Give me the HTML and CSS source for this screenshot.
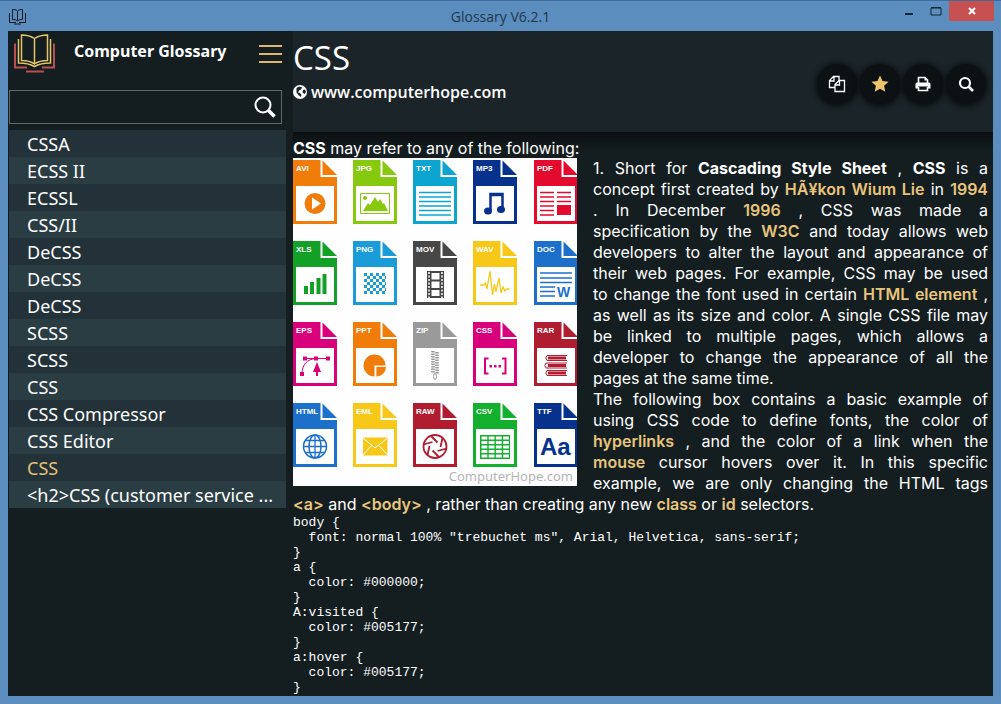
FILE: index.html
```html
<!DOCTYPE html>
<html lang="en">
<head>
<meta charset="utf-8">
<title>Glossary V6.2.1</title>
<link rel="stylesheet" href="styles.css">
</head>
<body>
<div class="window">
  <header class="titlebar">
    <svg class="app-icon" viewBox="0 0 17 17" width="17" height="17" fill="none" stroke="#10181c" stroke-width="1"><path d="M8.500 3v9.500M8.500 3C7 1.500 5 1.500 3.500 1.500v10C5 11.500 7 11.500 8.500 13C10 11.500 12 11.500 13.500 11.500v-10C12 1.500 10 1.500 8.500 3M.500 5v9.500H7M10 14.500h6.500V5M5 16h7"/></svg>
    <h1 class="window-title">Glossary V6.2.1</h1>
    <div class="window-controls">
      <button class="win-btn" aria-label="Minimize"><svg viewBox="0 0 12 12" width="12" height="12"><path d="M2 8h8v2H2z" fill="#15282f"/></svg></button>
      <button class="win-btn" aria-label="Maximize"><svg viewBox="0 0 12 12" width="12" height="12"><path d="M1 3h10v7H1zM1 2.500h10" fill="none" stroke="#15282f"/></svg></button>
      <button class="win-btn close" aria-label="Close"><svg viewBox="0 0 12 12" width="12" height="12"><path d="M3 3l6 6M9 3l-6 6" stroke="#fff" stroke-width="2"/></svg></button>
    </div>
  </header>
  <div class="client">
    <aside class="sidebar">
      <div class="brand">
        <svg class="logo" viewBox="0 0 42 42" width="42" height="42" fill="none" stroke-width="1.500">
          <path stroke="#b9504f" stroke-width="2" d="M1 10.500v24h12M40 10.500v24H28M12 38.500h18"/>
          <path stroke="#e3c569" d="M20.500 5.500v25M20.500 5.500C16 2.500 11 2 7.500 2v25.500c5 0 9 .500 13 3.500 4-3 8-3.500 13-3.500V2c-4 0-8.500.500-13 3.500zM4.500 6v24c6 0 11 .500 16 3.500 5-3 10-3.500 16-3.500V6"/>
        </svg>
        <span class="brand-name">Computer Glossary</span>
        <button class="menu-btn" aria-label="Menu"><svg viewBox="0 0 24 20" width="24" height="20"><path d="M1 2h23M1 10h23M1 18h23" stroke="#dcb96b" stroke-width="2"/></svg></button>
      </div>
      <form class="search">
        <input class="search-input" type="text" aria-label="Search terms">
        <button class="search-btn" type="button" aria-label="Search"><svg viewBox="0 0 24 24" width="24" height="24" fill="none" stroke="#fff"><circle cx="10" cy="10" r="7.500" stroke-width="2"/><path d="M15.500 15.500l6 6" stroke-width="3.500"/></svg></button>
      </form>
      <ul class="terms">
        <li><a class="term" href="#">CSSA</a></li>
        <li><a class="term" href="#">ECSS II</a></li>
        <li><a class="term" href="#">ECSSL</a></li>
        <li><a class="term" href="#">CSS/II</a></li>
        <li><a class="term" href="#">DeCSS</a></li>
        <li><a class="term" href="#">DeCSS</a></li>
        <li><a class="term" href="#">DeCSS</a></li>
        <li><a class="term" href="#">SCSS</a></li>
        <li><a class="term" href="#">SCSS</a></li>
        <li><a class="term" href="#">CSS</a></li>
        <li><a class="term" href="#">CSS Compressor</a></li>
        <li><a class="term" href="#">CSS Editor</a></li>
        <li><a class="term current" href="#" aria-current="page">CSS</a></li>
        <li><a class="term" href="#">&lt;h2&gt;CSS (customer service ...</a></li>
      </ul>
    </aside>
    <main class="main">
      <div class="topic">
        <div class="topic-text">
          <h2 class="topic-title">CSS</h2>
          <a class="source" href="#"><svg viewBox="0 0 14 14" width="14" height="14"><circle cx="7" cy="7" r="7" fill="#fff"/><path d="M3.500 3l3-1.500 2.500 1-1 2-2 1-1 2 2 .500 1.500 2L7.500 12 5.500 10 3.500 7.500z M10 5l2-.500 1 2.500-1.500 2-2-1.500z" fill="#1b2327"/></svg>www.computerhope.com</a>
        </div>
        <div class="actions">
          <button class="action" aria-label="Copy"><svg viewBox="0 0 18 18" width="18" height="18" fill="none" stroke="#fff" stroke-width="1.300"><path d="M7 12.500H1.500v-7l4-4H11v4M1.500 6H6V1.500M7 9.500l4-4h5.500v11H7zM7 10h4.500V5.500"/></svg></button>
          <button class="action" aria-label="Favorite"><svg viewBox="0 0 18 18" width="18" height="18"><path d="M9 .500l2.500 5.500 6 .700-4.400 4.100 1.200 6L9 13.800l-5.300 3 1.200-6L.500 6.700l6-.700z" fill="#ecc66b"/></svg></button>
          <button class="action" aria-label="Print"><svg viewBox="0 0 18 18" width="18" height="18"><path d="M4.500 8V2.500H11L13.500 5v3M4.500 12v3.500h9V12" fill="none" stroke="#fff" stroke-width="1.600"/><path d="M10.500 2v3.500H14M1.500 9q0-1.500 1.500-1.500h12q1.500 0 1.500 1.500v4.500h-2.500V11.500H4v2H1.500z" fill="#fff"/></svg></button>
          <button class="action" aria-label="Find"><svg viewBox="0 0 18 18" width="18" height="18" fill="none" stroke="#fff"><circle cx="8" cy="8" r="5" stroke-width="2.200"/><path d="M11.500 11.500l4.500 4.500" stroke-width="2.600"/></svg></button>
        </div>
      </div>
      <article class="article">
        <p class="lead"><b>CSS</b> may refer to any of the following:</p>
        <svg class="figure" viewBox="0 0 284 328" width="284" height="328" role="img" aria-label="File type icons">
          <defs>
            <g id="file"><path fill="currentColor" d="M0 0h27.500v17H44v47H0zM29.500 0.500L44 15H29.500z"/><path fill="#fff" d="M3 26h38v35H3z"/></g>
          </defs>
          <rect width="284" height="328" fill="#fefefe"/>
          <g class="o" transform="translate(0 2)"><use href="#file"/><text class="tag" x="3" y="11">AVI</text><circle cx="22" cy="43.500" r="10.500" fill="currentColor"/><path d="M19 37.500v12l9-6z" fill="#fff"/></g>
          <g class="lime" transform="translate(60 2)"><use href="#file"/><text class="tag" x="3" y="11">JPG</text><path d="M7.500 33.500h29v20h-29z" fill="none" stroke="currentColor"/><circle cx="12" cy="38" r="2" fill="currentColor"/><path d="M10 51l5-8 2 2 5-8 3 5 2-3 3 5 1-1 4 8z" fill="currentColor"/></g>
          <g class="cyan" transform="translate(120 2)"><use href="#file"/><text class="tag" x="3" y="11">TXT</text><path d="M6 32.500h32M6 37h32M6 41.500h32M6 46h32M6 50.500h32M6 55h32" stroke="currentColor" stroke-width="1.500"/></g>
          <g class="navy" transform="translate(180 2)"><use href="#file"/><text class="tag" x="3" y="11">MP3</text><path d="M17.500 51V34h12v15M17 35h13" fill="none" stroke="currentColor" stroke-width="2.500"/><ellipse cx="15" cy="51" rx="4" ry="3.500" fill="currentColor"/><ellipse cx="28" cy="49.500" rx="4" ry="3.500" fill="currentColor"/></g>
          <g class="red" transform="translate(241 2)"><use href="#file"/><text class="tag" x="3" y="11">PDF</text><path d="M6 32.500h14M23 32.500h14M6 37h14M23 37h14M6 41.500h14M23 41.500h14M6 46h14M6 50.500h14M6 55h14" stroke="currentColor" stroke-width="1.500"/><path d="M23 45h14v10H23z" fill="currentColor"/></g>

          <g class="green" transform="translate(0 83)"><use href="#file"/><text class="tag" x="3" y="11">XLS</text><path d="M13 53v-8M19 53V41M25.500 53V37M31.500 53V33" stroke="currentColor" stroke-width="4"/></g>
          <g class="cyan2" transform="translate(60 83)"><use href="#file"/><text class="tag" x="3" y="11">PNG</text><path d="M11 33.500h22M14 36.500h19M11 39.500h22M14 42.500h19M11 45.500h22M14 48.500h19M11 51.500h22" stroke="currentColor" stroke-width="3" stroke-dasharray="3 3"/></g>
          <g class="dark" transform="translate(120 83)"><use href="#file"/><text class="tag" x="3" y="11">MOV</text><path d="M14 30h17v27H14z" fill="currentColor"/><path d="M18.500 32h8v6.500h-8zM18.500 40.500h8V47h-8zM18.500 49h8v6h-8z" fill="#fff"/><path d="M16 31v26M29 31v26" stroke="#fff" stroke-width="1.500" stroke-dasharray="2 1.500"/></g>
          <g class="yellow" transform="translate(180 83)"><use href="#file"/><text class="tag" x="3" y="11">WAV</text><path d="M7 44h4l1.500-2 1.500 6 3-18 2.500 24 2-11 1.500 8 3-14 2 15 2-6 2 4 1.500-2h3" fill="none" stroke="currentColor" stroke-width="1.300"/></g>
          <g class="blue" transform="translate(241 83)"><use href="#file"/><text class="tag" x="3" y="11">DOC</text><path d="M6 32h32M6 37h32M6 41.500h32M6 46h15M6 50.500h15M6 55h15" stroke="currentColor" stroke-width="1.500"/><text class="glyph" x="23" y="56" font-size="14">W</text></g>

          <g class="pink" transform="translate(0 164)"><use href="#file"/><text class="tag" x="3" y="11">EPS</text><path d="M11 36.500h24M23 36.500C14 37 9 43 9 52" fill="none" stroke="currentColor"/><path d="M10 34.500h4v4h-4zM21 34.500h4v4h-4zM33 34.500h4v4h-4zM7 50h4v4H7zM24 40l4 10h-3v4h-2v-4h-3z" fill="currentColor"/></g>
          <g class="o" transform="translate(60 164)"><use href="#file"/><text class="tag" x="3" y="11">PPT</text><path d="M21.500 43.500h11A11 11 0 1 0 21.500 54.500z" fill="currentColor"/><path d="M23 44.500h10.500A10.500 10.500 0 0 1 23 55z" fill="currentColor" stroke="#fff" stroke-width=".800"/></g>
          <g class="gray" transform="translate(120 164)"><use href="#file"/><text class="tag" x="3" y="11">ZIP</text><path d="M20 29v22M24 30v22" stroke="currentColor" stroke-width="3.500" stroke-dasharray="1.500 1"/><ellipse cx="22" cy="54.500" rx="1.500" ry="3" fill="#fff" stroke="currentColor"/></g>
          <g class="pink" transform="translate(180 164)"><use href="#file"/><text class="tag" x="3" y="11">CSS</text><path d="M15.500 36.500H12v15h3.500M29 36.500h3.500v15H29" fill="none" stroke="currentColor" stroke-width="2"/><path d="M16.500 43h2.500v2.500h-2.500zM21 43h2.500v2.500H21zM25.500 43H28v2.500h-2.500z" fill="currentColor"/></g>
          <g class="maroon" transform="translate(241 164)"><use href="#file"/><text class="tag" x="3" y="11">RAR</text><path d="M33 33.500H13q-2.500 2.500 0 5h20M33 41H12q-2.500 2.500 0 5h21M33 48.500H13q-2.500 2.500 0 5h20" fill="none" stroke="currentColor"/><path d="M14 36h18M14 43.500h18M14 51h18" stroke="currentColor" stroke-width="3"/></g>

          <g class="blue" transform="translate(0 245)"><use href="#file"/><text class="tag" x="3" y="11">HTML</text><path d="M22 32v23M10.500 43.500h23M12.500 37.500h19M12.500 49.500h19" stroke="currentColor" stroke-width="1.300"/><g fill="none" stroke="currentColor" stroke-width="1.500"><circle cx="22" cy="43.500" r="11.500"/><ellipse cx="22" cy="43.500" rx="6" ry="11.500"/></g></g>
          <g class="yellow" transform="translate(60 245)"><use href="#file"/><text class="tag" x="3" y="11">EML</text><path d="M10 34.500h24.500v18H10z" fill="currentColor"/><path d="M10 35l12 10 12.500-10M10 52l8.500-9.500M34.500 52L26 42.500" fill="none" stroke="#fff"/></g>
          <g class="maroon" transform="translate(120 245)"><use href="#file"/><text class="tag" x="3" y="11">RAW</text><g fill="none" stroke="currentColor" stroke-width="1.800"><circle cx="22" cy="43.500" r="11.500"/><path d="M18 33l6.500 6.500M29.500 35l-2 9M33.500 45.500l-9 2.500M26 54l-6.500-6.500M14.500 52l2-9M10.500 41.500l9-2.500"/></g></g>
          <g class="green2" transform="translate(180 245)"><use href="#file"/><text class="tag" x="3" y="11">CSV</text><path d="M7 32h30v24H7z" fill="currentColor"/><path d="M8.500 35h27.500M8.500 39.500h27.500M8.500 44h27.500M8.500 48.500h27.500M8.500 53h27.500" stroke="#fff" stroke-width="3" stroke-dasharray="5.800 1.400"/></g>
          <g class="navy" transform="translate(241 245)"><use href="#file"/><text class="tag" x="3" y="11">TTF</text><text class="glyph" x="6" y="52" font-size="24">Aa</text></g>
          <text class="mark" x="280" y="323" text-anchor="end">ComputerHope.com</text>
        </svg>
        <p class="body-text">1. Short for <b>Cascading Style Sheet</b> , <b>CSS</b> is a<br>
          concept first created by <a class="link" href="#">HÃ¥kon Wium Lie</a> in <a class="link" href="#">1994</a><br>
          . In December <a class="link" href="#">1996</a> , CSS was made a<br>
          specification by the <a class="link" href="#">W3C</a> and today allows web<br>
          developers to alter the layout and appearance of<br>
          their web pages. For example, CSS may be used<br>
          to change the font used in certain <a class="link" href="#">HTML element</a> ,<br>
          as well as its size and color. A single CSS file may<br>
          be linked to multiple pages, which allows a<br>
          developer to change the appearance of all the
          <span class="end">pages at the same time.</span></p>
        <p class="body-text">The following box contains a basic example of<br>
          using CSS code to define fonts, the color of<br>
          <a class="link" href="#">hyperlinks</a> , and the color of a link when the<br>
          <a class="link" href="#">mouse</a> cursor hovers over it. In this specific<br>
          example, we are only changing the HTML tags
          <span class="end"><a class="link" href="#">&lt;a&gt;</a> and <a class="link" href="#">&lt;body&gt;</a> , rather than creating any new <a class="link" href="#">class</a> or <a class="link" href="#">id</a> selectors.</span></p>
        <pre class="code">body {
  font: normal 100% "trebuchet ms", Arial, Helvetica, sans-serif;
}
a {
  color: #000000;
}
A:visited {
  color: #005177;
}
a:hover {
  color: #005177;
}</pre>
      </article>
    </main>
  </div>
</div>
</body>
</html>
```
FILE: styles.css
```css
* { box-sizing: border-box; }
body { margin: 0; background: #5b8dbf; }
button { border: 0; padding: 0; background: none; display: flex; align-items: center; justify-content: center; }
a { text-decoration: none; }

.window { min-height: 100vh; display: flex; flex-direction: column; padding: 0 8px 8px; border-top: 1px solid #3d6c9e; background: #5b8dbf; }
.titlebar { display: grid; grid-template-columns: 1fr auto 1fr; height: 30px; align-items: center; flex: none; }
.app-icon { margin-left: 1px; }
.window-title { margin: 0; font: 400 14px "Open Sans", sans-serif; color: #20384a; }
.window-controls { display: flex; align-self: start; justify-self: end; margin-right: -1px; }
.win-btn { width: 27px; height: 20px; }
.win-btn.close { width: 45px; background: #c75050; }

.client { flex: 1; display: flex; background: #141e20; color: #fff; }
.sidebar { width: 278px; flex: none; }
.brand { display: flex; align-items: center; height: 59px; padding: 0 4px 13px 6px; }
.logo { flex: none; }
.brand-name { flex: 1; margin-left: 18px; font: 700 16px "Noto Sans", sans-serif; padding-bottom: 6px; }
.menu-btn { flex: none; }
.search { display: flex; margin: 0 4px 6px 1px; height: 34px; border: 1px solid #5f686b; }
.search-input { flex: 1; min-width: 0; border: 0; padding: 0 8px; background: none; color: #fff; font: 16px "Noto Sans", sans-serif; outline: 0; }
.search-btn { width: 32px; }
.terms { list-style: none; margin: 0 0 0 1px; padding: 0; }
.term { display: block; height: 27px; padding-left: 18px; font: 18px/28px "Noto Sans", sans-serif; color: #fff; background: #233238; white-space: nowrap; overflow: hidden; text-overflow: ellipsis; }
.terms li:nth-child(even) .term { background: #2a3d43; }
.terms .current { color: #e3c078; }

.main { flex: 1; min-width: 0; display: flex; flex-direction: column; padding-left: 7px; }
.topic { display: flex; justify-content: space-between; align-items: center; height: 101px; background: #1b2428; }
.topic-text { align-self: start; padding-top: 4px; }
.topic-title { margin: 0; font: 400 33px/46px "Open Sans", sans-serif; }
.source { display: flex; align-items: center; gap: 4px; font: 600 16px/22px "Open Sans", sans-serif; color: #fff; }
.actions { display: flex; gap: 3px; padding: 4px 7px 0 0; }
.action { width: 40px; height: 40px; border-radius: 50%; background: #0c1114; box-shadow: 0 1px 5px 2px #0c1114; }

.article { padding: 6px 5px 0 0; font: 16px/21px Inter, sans-serif; background: linear-gradient(#0a0f12, #141e20 20px); }
.lead, .body-text { margin: 0; }
.lead { line-height: 20px; }
.body-text { text-align: justify; text-align-last: justify; }
.end { display: block; text-align-last: left; }
.figure { float: left; margin-right: 16px; }
.link { color: #e8c57c; font-weight: 600; }
.code { clear: both; margin: 0; font: 13px/15px "Liberation Mono", monospace; }

.tag { font: 700 8px "Liberation Sans", sans-serif; fill: #fff; }
.glyph { font-family: "Liberation Sans", sans-serif; font-weight: 700; fill: currentColor; }
.mark { font: 13px "Noto Sans", sans-serif; fill: #b4b4b4; }
.o { color: #f07c0a; }
.lime { color: #86c90f; }
.cyan { color: #0ba5cf; }
.cyan2 { color: #1a9cd8; }
.navy { color: #06328e; }
.red { color: #e30a2d; }
.green { color: #12a027; }
.green2 { color: #12b02c; }
.dark { color: #474747; }
.yellow { color: #f8c818; }
.blue { color: #1c70ca; }
.pink { color: #d9007c; }
.gray { color: #9a9a9a; }
.maroon { color: #b01c30; }
```
